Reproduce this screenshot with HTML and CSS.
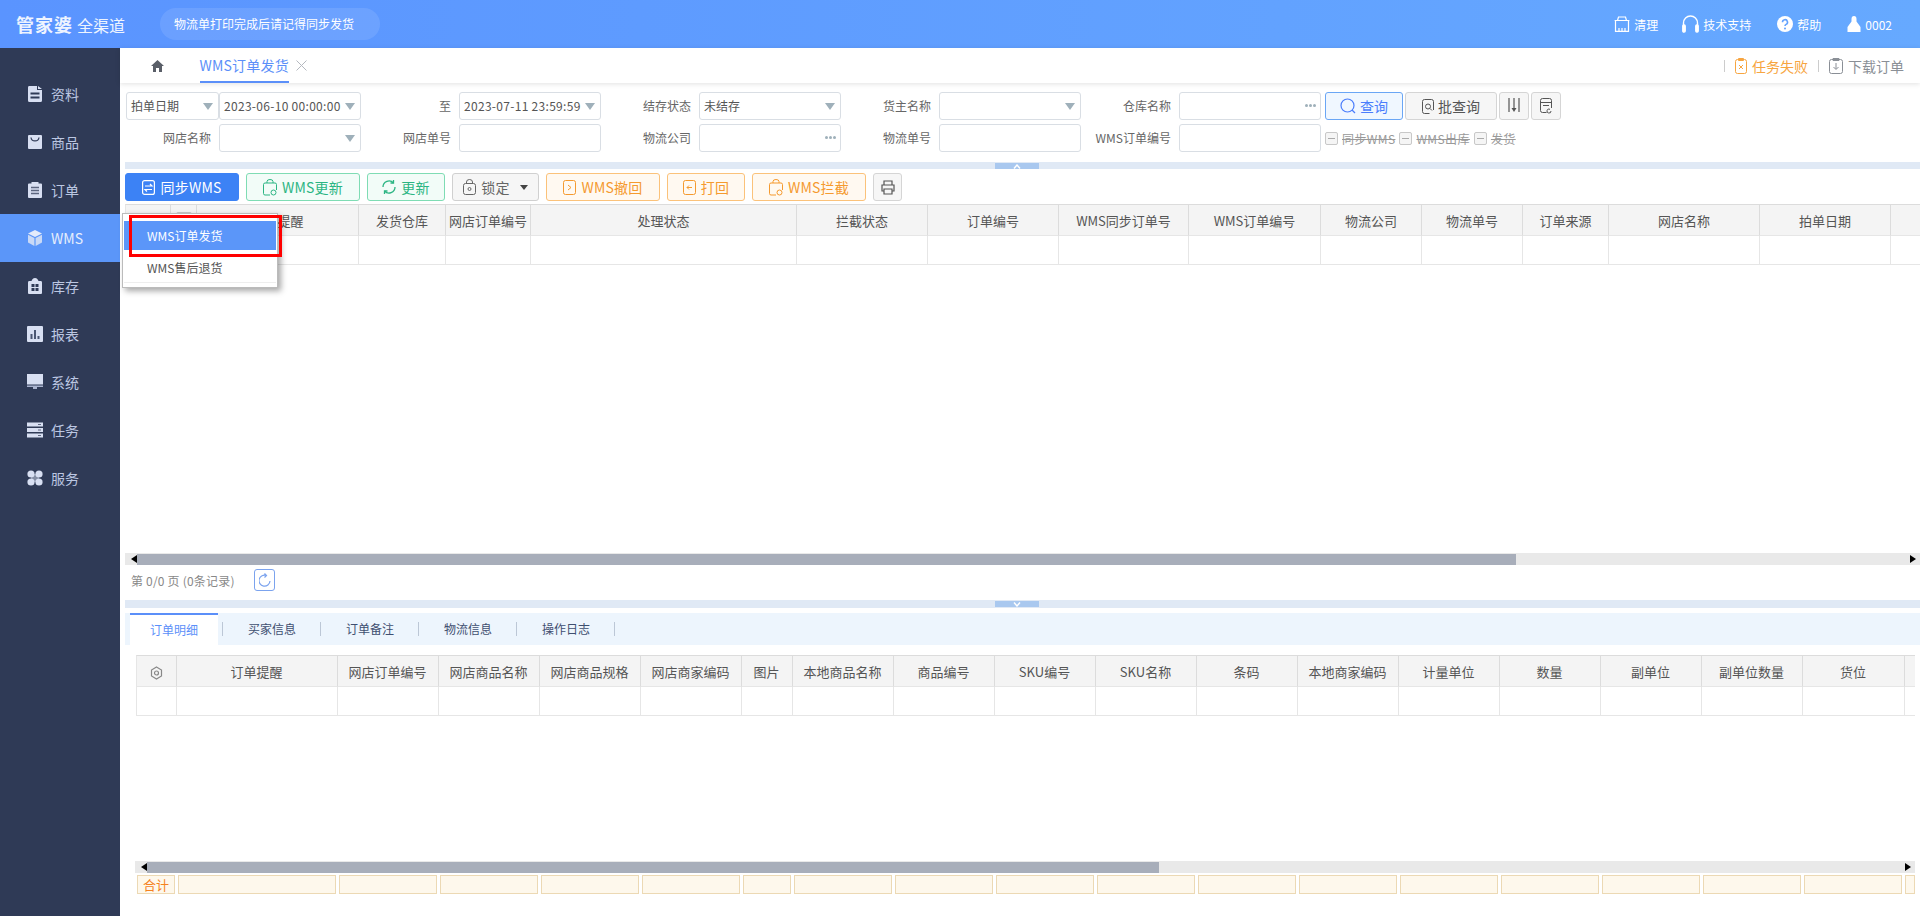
FILE: index.html
```html
<!DOCTYPE html>
<html lang="zh-CN">

<head>
    <meta charset="UTF-8">
    <title>WMS订单发货</title>
    <link rel="stylesheet" href="styles.css">
</head>

<body>
    <header class="topbar">
        <div class="logo"><span class="logo-main">管家婆</span><span class="logo-sub">全渠道</span></div>
        <div class="notice">物流单打印完成后请记得同步发货</div>
        <div class="top-links">
            <a class="top-link link-clean">
                <svg width="16" height="16" viewBox="0 0 16 16" fill="none" stroke="#fff" stroke-width="1.200"><path d="M3.500 4.500L4.500 1h7l1 3.500M.6 4.500h14.800M1.500 4.500v10.900h13V4.500M5 15v-3M8 15v-3M11 15v-3"/></svg>
                清理
            </a>
            <a class="top-link link-support">
                <svg width="17" height="18" viewBox="0 0 17 18" fill="none" stroke="#fff" stroke-width="1.400"><path d="M1.500 11V8a7 7 0 0 1 14 0v3"/><rect x=".8" y="10" width="2.400" height="7" rx="1" fill="#fff"/><rect x="13.800" y="10" width="2.400" height="7" rx="1" fill="#fff"/></svg>
                技术支持
            </a>
            <a class="top-link link-help">
                <svg width="16" height="16" viewBox="0 0 16 16"><circle cx="8" cy="8" r="8" fill="#fff"/><path d="M5.500 6.200a2.500 2.500 0 1 1 3.600 2.200c-.8.400-1.100.8-1.100 1.700" fill="none" stroke="#62a2ff" stroke-width="1.600"/><circle cx="8" cy="12.400" r="1" fill="#62a2ff"/></svg>
                帮助
            </a>
            <a class="top-link">
                <svg width="14" height="16" viewBox="0 0 14 16" fill="#fff"><path d="M4.500 3a2.500 3 0 0 1 5 0v2.500L13.500 11v5H.5v-5l4-5.500z"/></svg>
                0002
            </a>
        </div>
    </header>

    <div class="layout">
        <nav class="sidebar">
            <a class="nav-item">
                <svg width="16" height="16" viewBox="0 0 16 16"><path fill="#d8dff2" d="M2 0h8v4h5v10.500a1.500 1.500 0 0 1-1.500 1.500h-11A1.500 1.500 0 0 1 1 14.500v-13A1.500 1.500 0 0 1 2 0zM11 0l4 3h-4z"/><path stroke="#2f3a56" stroke-width="2" d="M3.500 7.500h9M3.500 11.500h9"/></svg>
                资料
            </a>
            <a class="nav-item">
                <svg width="16" height="16" viewBox="0 0 16 16"><rect x="1" y="1" width="14" height="14" rx="1" fill="#d8dff2"/><path fill="none" stroke="#2f3a56" stroke-width="1.200" d="M4 3.500c.5 4.500 7.500 4.500 8 0"/></svg>
                商品
            </a>
            <a class="nav-item">
                <svg width="16" height="16" viewBox="0 0 16 16"><path fill="#d8dff2" d="M2 1.500h2.500V0h7v1.500H14a1 1 0 0 1 1 1V15a1 1 0 0 1-1 1H2a1 1 0 0 1-1-1V2.500a1 1 0 0 1 1-1z"/><path stroke="#5c6680" stroke-width="1.400" d="M4 5.500h8M4 8.500h8M4 11.500h8"/></svg>
                订单
            </a>
            <a class="nav-item active">
                <svg width="16" height="16" viewBox="0 0 16 16"><path fill="#e3ebfb" d="M8 0l7 3.500L8 7 1 3.500z"/><path fill="#c9d9f6" d="M1 4.800l6.400 3.300V16L1 12.500zM15 4.800L8.600 8.100V16l6.400-3.500z"/></svg>
                WMS
            </a>
            <a class="nav-item">
                <svg width="16" height="16" viewBox="0 0 16 16"><path fill="#d8dff2" d="M8 0c2 0 3 1.500 3.500 3H14a1.500 1.500 0 0 1 1 1.500V15a1 1 0 0 1-1 1H2a1 1 0 0 1-1-1V4.500A1.500 1.500 0 0 1 2 3h2.500C5 1.500 6 0 8 0z"/><path fill="#2f3a56" d="M4.500 6h3v3h-3zM8.500 6h3v3h-3zM4.500 10h3v3h-3zM8.500 10h3v3h-3z"/></svg>
                库存
            </a>
            <a class="nav-item">
                <svg width="16" height="16" viewBox="0 0 16 16"><rect width="16" height="16" rx="1" fill="#d8dff2"/><path fill="#4b5672" d="M3.500 8h2v5h-2zM7 4h2v9H7zM10.500 10h2v3h-2z"/></svg>
                报表
            </a>
            <a class="nav-item">
                <svg width="16" height="16" viewBox="0 0 16 16"><path fill="#d8dff2" d="M0 0h16v10.500H0z"/><path fill="#aab4cf" d="M0 11.500h16V13H0zM6 13h4v2H6z"/></svg>
                系统
            </a>
            <a class="nav-item">
                <svg width="16" height="16" viewBox="0 0 16 16"><path fill="#d8dff2" d="M0 .5h16v4H0zM0 6h16v4H0zM0 11.500h16v4H0z"/><path fill="#5c6680" d="M11 2h3v1h-3zM11 7.500h3v1h-3zM11 13h3v1h-3z"/></svg>
                任务
            </a>
            <a class="nav-item">
                <svg width="16" height="16" viewBox="0 0 16 16" fill="#d8dff2"><circle cx="4" cy="4" r="3.600"/><circle cx="12" cy="4" r="3.600"/><circle cx="4" cy="12" r="3.600"/><circle cx="12" cy="12" r="3.600"/><path d="M4 4h8v8H4z" fill="#d8dff2" opacity=".5"/></svg>
                服务
            </a>
        </nav>

        <main class="content">
            <div class="tabbar">
                <svg class="home-icon" width="13" height="12" viewBox="0 0 13 12" fill="#5a5f68"><path d="M6.500 0L13 6h-2v6H8V8H5v4H2V6H0z"/></svg>
                <div class="page-tab">WMS订单发货</div>
                <svg class="tab-close" width="11" height="11" viewBox="0 0 11 11" stroke="#b4b8bf" fill="none"><path d="M.5.500l10 10M10.500.500l-10 10"/></svg>
                <div class="tab-tools">
                    <span class="tool-sep"></span>
                    <svg width="12" height="16" viewBox="0 0 12 16" fill="none" stroke="#f7a540"><rect x=".5" y="1.500" width="11" height="14" rx="2"/><path d="M3.500.5h5v2h-5zM4 7l4 4M8 7l-4 4"/></svg>
                    <span class="tool-fail">任务失败</span>
                    <span class="tool-sep"></span>
                    <svg width="14" height="16" viewBox="0 0 14 16" fill="none" stroke="#8a8f96"><rect x=".5" y="1.500" width="13" height="14" rx="2"/><path d="M4 .5h6v2H4zM7 5v6M4.500 9L7 11.500 9.500 9"/></svg>
                    <span class="tool-down">下载订单</span>
                </div>
            </div>

            <form class="filters">
                <div class="field field-select">拍单日期<i class="caret"></i></div>
                <div class="field field-select date">2023-06-10 00:00:00<i class="caret"></i></div>
                <label class="lbl">至</label>
                <div class="field field-select date">2023-07-11 23:59:59<i class="caret"></i></div>
                <label class="lbl">结存状态</label>
                <div class="field field-select">未结存<i class="caret"></i></div>
                <label class="lbl">货主名称</label>
                <div class="field field-select"><i class="caret"></i></div>
                <label class="lbl">仓库名称</label>
                <div class="field field-select"><i class="dots"><b></b><b></b><b></b></i></div>
                <div class="query-btns">
                    <button type="button" class="qbtn qbtn-main">
                        <svg width="16" height="16" viewBox="0 0 16 16" fill="none" stroke="#4a7dfc" stroke-width="1.200"><circle cx="7.500" cy="7.500" r="6.500"/><path d="M12 12l3 3"/></svg>
                        查询
                    </button>
                    <button type="button" class="qbtn qbtn-batch">
                        <svg width="12" height="15" viewBox="0 0 12 15" fill="none" stroke="#555"><path d="M11.500 11V2.500a2 2 0 0 0-2-2h-7a2 2 0 0 0-2 2v10a2 2 0 0 0 2 2h5"/><circle cx="6" cy="7.500" r="2.500"/><path d="M8 9.500l2 2"/></svg>
                        批查询
                    </button>
                    <button type="button" class="qbtn qbtn-icon">
                        <svg width="12" height="16" viewBox="0 0 12 16" stroke="#555" fill="none" stroke-width="1.200"><path d="M1 0v14M6 0v10M11 0v14"/><path d="M3.500 10h5L6 14z" fill="#555" stroke="none"/></svg>
                    </button>
                    <button type="button" class="qbtn qbtn-icon">
                        <svg width="12" height="16" viewBox="0 0 12 16" stroke="#555" fill="none"><path d="M2.500.5h7a2 2 0 0 1 2 2V10M2.500.5a2 2 0 0 0-2 2v10a2 2 0 0 0 2 2h4M1 4.500h10M3 7.500h6"/><path d="M11 13a2 2 0 1 1-1-1.700"/></svg>
                    </button>
                </div>

                <label class="lbl lbl-span">网店名称</label>
                <div class="field field-select"><i class="caret"></i></div>
                <label class="lbl">网店单号</label>
                <div class="field"></div>
                <label class="lbl">物流公司</label>
                <div class="field"><i class="dots"><b></b><b></b><b></b></i></div>
                <label class="lbl">物流单号</label>
                <div class="field"></div>
                <label class="lbl">WMS订单编号</label>
                <div class="field"></div>
                <div class="checks">
                    <span class="check"><i class="box"></i><s>同步WMS</s></span>
                    <span class="check"><i class="box"></i><s>WMS出库</s></span>
                    <span class="check"><i class="box"></i><s>发货</s></span>
                </div>
            </form>

            <div class="splitter split-top">
                <i class="split-handle"><svg width="8" height="5" viewBox="0 0 8 5" fill="none" stroke="#fff" stroke-width="1.400"><path d="M1 4.500L4 1l3 3.500"/></svg></i>
            </div>

            <div class="toolbar">
                <button class="btn btn-primary">
                    <svg width="13" height="15" viewBox="0 0 13 15" fill="none" stroke="#fff" stroke-width="1.200"><rect x=".6" y=".6" width="11.800" height="13.800" rx="2"/><path d="M3 6h7L8 4M10 9.500H3l2 2"/></svg>
                    同步WMS
                </button>
                <button class="btn btn-green">
                    <svg width="14" height="17" viewBox="0 0 14 17" fill="none" stroke="#2bb583"><path d="M2 4h10a1.500 1.500 0 0 1 1.500 1.500V11M2 4A1.500 1.500 0 0 0 .5 5.500v9A1.500 1.500 0 0 0 2 16h5M4 4V2.500a3 2 0 0 1 6 0V4"/><circle cx="10.500" cy="13.500" r="2.500"/></svg>
                    WMS更新
                </button>
                <button class="btn btn-green">
                    <svg width="14" height="16" viewBox="0 0 14 16" fill="none" stroke="#2bb583" stroke-width="1.300"><path d="M1 8a6 6 0 0 1 10.500-4M13 8a6 6 0 0 1-10.500 4"/><path d="M11.500 1v3H8.500M2.500 15v-3h3"/></svg>
                    更新
                </button>
                <button class="btn btn-gray">
                    <svg width="13" height="16" viewBox="0 0 13 16" fill="none" stroke="#666"><rect x=".5" y="4.500" width="12" height="11" rx="2"/><path d="M3.500 4.500V3a3 2.500 0 0 1 6 0v1.500"/><circle cx="6.500" cy="10" r="1.500"/></svg>
                    锁定
                    <i class="btn-caret"></i>
                </button>
                <button class="btn btn-orange">
                    <svg width="13" height="15" viewBox="0 0 13 15" fill="none" stroke="#f59a2f"><rect x=".5" y=".5" width="12" height="14" rx="2"/><path d="M5 5l3 2.500L5 10"/></svg>
                    WMS撤回
                </button>
                <button class="btn btn-orange">
                    <svg width="13" height="15" viewBox="0 0 13 15" fill="none" stroke="#f59a2f"><rect x=".5" y=".5" width="12" height="14" rx="2"/><path d="M9 7.500H4M6 5.500l-2 2 2 2"/></svg>
                    打回
                </button>
                <button class="btn btn-orange">
                    <svg width="14" height="17" viewBox="0 0 14 17" fill="none" stroke="#f59a2f"><path d="M2 4h10a1.500 1.500 0 0 1 1.500 1.500V11M2 4A1.500 1.500 0 0 0 .5 5.500v9A1.500 1.500 0 0 0 2 16h5M4 4V2.500a3 2 0 0 1 6 0V4"/><circle cx="10.500" cy="13.500" r="2.500"/></svg>
                    WMS拦截
                </button>
                <button class="btn btn-print">
                    <svg width="14" height="15" viewBox="0 0 14 15" fill="none" stroke="#555" stroke-width="1.200"><path d="M3 5V1h8v4M3 11H1V5h12v6h-2M3 9h8v5H3z"/></svg>
                </button>
            </div>

            <div class="grid-wrap grid-main">
                <table class="grid">
                    <colgroup>
                        <col width="46"><col width="26"><col width="162"><col width="87"><col width="85"><col width="266"><col width="131"><col width="131"><col width="130"><col width="132"><col width="101"><col width="101"><col width="86"><col width="151"><col width="131"><col width="40">
                    </colgroup>
                    <tr>
                        <th></th><th><i class="box head-box"></i></th><th>订单提醒</th><th>发货仓库</th><th>网店订单编号</th><th>处理状态</th><th>拦截状态</th><th>订单编号</th><th>WMS同步订单号</th><th>WMS订单编号</th><th>物流公司</th><th>物流单号</th><th>订单来源</th><th>网店名称</th><th>拍单日期</th><th></th>
                    </tr>
                    <tr>
                        <td></td><td></td><td></td><td></td><td></td><td></td><td></td><td></td><td></td><td></td><td></td><td></td><td></td><td></td><td></td><td></td>
                    </tr>
                </table>
            </div>
            <div class="hscroll">
                <i class="arrow arrow-l"></i>
                <div class="track"><div class="thumb thumb-main"></div></div>
                <i class="arrow arrow-r"></i>
            </div>

            <div class="pager">
                <span class="page-info">第 0/0 页 (0条记录)</span>
                <button class="refresh">
                    <svg width="12" height="15" viewBox="0 0 12 15" fill="none" stroke="#7ba3ee" stroke-width="1.200"><path d="M7.500 2.500A5.500 5.500 0 1 0 11 8M5.500.5l2 2-2 2"/></svg>
                </button>
            </div>

            <div class="splitter split-bottom">
                <i class="split-handle"><svg width="8" height="5" viewBox="0 0 8 5" fill="none" stroke="#fff" stroke-width="1.400"><path d="M1 .5L4 4l3-3.500"/></svg></i>
            </div>

            <div class="detail-tabs">
                <a class="dtab on">订单明细</a>
                <a class="dtab">买家信息</a>
                <a class="dtab">订单备注</a>
                <a class="dtab">物流信息</a>
                <a class="dtab">操作日志</a>
            </div>

            <div class="grid-wrap grid-detail">
                <table class="grid">
                    <colgroup>
                        <col width="41"><col width="161"><col width="101"><col width="101"><col width="101"><col width="101"><col width="51"><col width="101"><col width="101"><col width="101"><col width="101"><col width="101"><col width="101"><col width="101"><col width="101"><col width="101"><col width="101"><col width="102"><col width="20">
                    </colgroup>
                    <tr>
                        <th><svg class="gear" width="13" height="14" viewBox="0 0 13 14" fill="none" stroke="#888" stroke-width="1.200"><path d="M6.500 1l5 3v6l-5 3-5-3V4z"/><circle cx="6.500" cy="7" r="2"/></svg></th>
                        <th>订单提醒</th><th>网店订单编号</th><th>网店商品名称</th><th>网店商品规格</th><th>网店商家编码</th><th>图片</th><th>本地商品名称</th><th>商品编号</th><th>SKU编号</th><th>SKU名称</th><th>条码</th><th>本地商家编码</th><th>计量单位</th><th>数量</th><th>副单位</th><th>副单位数量</th><th>货位</th><th></th>
                    </tr>
                    <tr>
                        <td></td><td></td><td></td><td></td><td></td><td></td><td></td><td></td><td></td><td></td><td></td><td></td><td></td><td></td><td></td><td></td><td></td><td></td><td></td>
                    </tr>
                </table>
            </div>
            <div class="hscroll hscroll-detail">
                <i class="arrow arrow-l"></i>
                <div class="track"><div class="thumb thumb-detail"></div></div>
                <i class="arrow arrow-r"></i>
            </div>

            <div class="totals">
                <div class="total total-label">合计</div>
                <div class="total total-wide"></div>
                <div class="total"></div><div class="total"></div><div class="total"></div><div class="total"></div>
                <div class="total total-pic"></div>
                <div class="total"></div><div class="total"></div><div class="total"></div><div class="total"></div><div class="total"></div><div class="total"></div><div class="total"></div><div class="total"></div><div class="total"></div><div class="total"></div><div class="total"></div>
                <div class="total total-end"></div>
            </div>
        </main>
    </div>

    <!-- dropdown of 同步WMS -->
    <div class="sync-menu">
        <div class="sync-item on">WMS订单发货</div>
        <div class="sync-item">WMS售后退货</div>
    </div>
    <div class="red-mark"></div>
</body>

</html>
```

FILE: styles.css
```css
* {
    box-sizing: border-box;
}

html,
body {
    height: 916px;
    overflow: hidden;
}

body {
    margin: 0;
    font-family: "Noto Sans CJK SC", "Liberation Sans", sans-serif;
    font-size: 12px;
    color: #555;
    background: #fff;
}

i {
    font-style: normal;
}

/* top bar */
.topbar {
    height: 48px;
    display: flex;
    align-items: center;
    color: #fff;
    background: linear-gradient(90deg, #5a94ff, #66a9ff);
}

.logo {
    width: 160px;
    padding-left: 16px;
    font-weight: 700;
    white-space: nowrap;
    color: #eef4ff;
}

.logo-main {
    font-size: 18px;
    letter-spacing: 1px;
}

.logo-sub {
    margin-left: 4px;
    font-size: 16px;
    font-weight: 400;
}

.notice {
    width: 220px;
    height: 32px;
    line-height: 32px;
    padding-left: 14px;
    border-radius: 16px;
    background: rgba(255, 255, 255, 0.1);
}

.top-links {
    margin-left: auto;
    display: flex;
    padding-right: 28px;
}

.top-link {
    display: flex;
    align-items: center;
    gap: 4px;
    margin-left: 26px;
}

.link-support {
    margin-left: 24px;
}

/* sidebar */
.layout {
    display: flex;
    height: 868px;
}

.sidebar {
    width: 120px;
    flex: none;
    padding-top: 22px;
    background: #2f3a56;
}

.nav-item {
    height: 48px;
    display: flex;
    align-items: center;
    gap: 8px;
    padding-left: 27px;
    font-size: 14px;
    color: #bcc7e2;
}

.nav-item.active {
    background: #5b96f9;
    color: #e6eefc;
}

/* main column */
.content {
    flex: 1;
    min-width: 0;
    padding-left: 5px;
}

.tabbar {
    height: 35px;
    margin-left: -5px;
    padding-left: 30.500px;
    display: flex;
    align-items: center;
    box-shadow: 0 1px 5px rgba(0, 0, 0, 0.12);
}

.page-tab {
    height: 35px;
    line-height: 35px;
    margin-left: 36px;
    font-size: 14px;
    letter-spacing: 0.2px;
    color: #5b8ff9;
    border-bottom: 2px solid #5b8ff9;
}

.tab-close {
    margin-left: 7px;
}

.tab-tools {
    margin-left: auto;
    padding-right: 16px;
    display: flex;
    align-items: center;
    gap: 5px;
    font-size: 14px;
}

.tool-sep {
    width: 1px;
    height: 12px;
    margin-right: 5px;
    background: #ccc;
}

.tool-fail {
    margin-right: 5px;
    color: #f7a540;
}

.tool-down {
    color: #8a8f96;
}

/* filters */
.filters {
    margin: 9px 0 0 1px;
    display: grid;
    grid-template-columns: 93px 142px 98px 142px 98px 142px 98px 142px 98px 142px auto;
    grid-auto-rows: 28px;
    row-gap: 4px;
}

.lbl {
    line-height: 28px;
    padding-right: 8px;
    text-align: right;
    color: #666;
    white-space: nowrap;
}

.field {
    position: relative;
    line-height: 26px;
    padding-left: 4px;
    background: #fff;
    border: 1px solid #d9dee4;
    border-radius: 3px;
    white-space: nowrap;
}

.date {
    letter-spacing: 0.3px;
}

.caret {
    position: absolute;
    right: 5px;
    top: 10px;
    border: 5px solid transparent;
    border-top: 7px solid #9fb0ba;
    border-bottom: 0;
}

.dots {
    position: absolute;
    right: 4px;
    top: 11px;
    display: flex;
    gap: 1px;
}

.dots b {
    width: 3px;
    height: 3px;
    border-radius: 50%;
    background: #9fb0ba;
}

.query-btns {
    display: flex;
    gap: 2px;
    margin-left: 4px;
}

.qbtn {
    height: 28px;
    padding: 0;
    display: flex;
    align-items: center;
    justify-content: center;
    gap: 4px;
    font: inherit;
    font-size: 14px;
    color: #555;
    background: #f6f6f6;
    border: 1px solid #d5d5d5;
    border-radius: 3px;
}

.qbtn-main {
    width: 78px;
    color: #4a7dfc;
    background: #f0f7ff;
    border-color: #6aa6f5;
}

.qbtn-batch {
    width: 92px;
}

.qbtn-icon {
    width: 30px;
}

.checks {
    display: flex;
    align-items: center;
    margin-left: 4px;
    color: #999;
    letter-spacing: 0.4px;
    white-space: nowrap;
}

.check {
    display: flex;
    align-items: center;
    gap: 4px;
    margin-right: 4px;
}

.box {
    display: inline-block;
    position: relative;
    width: 13px;
    height: 13px;
    background: #f5f5f5;
    border: 1px solid #c8c8c8;
    border-radius: 2px;
}

.box::after {
    content: "";
    position: absolute;
    left: 2px;
    right: 2px;
    top: 5px;
    height: 1px;
    background: #aaa;
}

.head-box {
    width: 16px;
    height: 16px;
    position: relative;
    top: -2px;
    vertical-align: middle;
}

.splitter {
    position: relative;
    height: 7px;
    margin-top: 10px;
    background: #e0e9f5;
}

.split-handle {
    position: absolute;
    left: 870px;
    top: 1px;
    width: 44px;
    height: 6px;
    display: flex;
    align-items: center;
    justify-content: center;
    background: #a9c8ef;
}

.split-bottom {
    height: 8px;
    margin-top: 5px;
}

/* toolbar */
.toolbar {
    display: flex;
    gap: 7px;
    margin-top: 4px;
}

.btn {
    height: 28px;
    padding: 0;
    display: flex;
    align-items: center;
    justify-content: center;
    gap: 5px;
    font: inherit;
    font-size: 14px;
    letter-spacing: 0.2px;
    border-radius: 3px;
    background: #fff;
}

.btn:nth-child(1),
.btn:nth-child(2),
.btn:nth-child(5),
.btn:nth-child(7) {
    width: 114px;
}

.btn:nth-child(3),
.btn:nth-child(6) {
    width: 78px;
}

.btn:nth-child(4) {
    width: 87px;
}

.btn-primary {
    color: #fff;
    background: #3c82f5;
    border: 1px solid #3c82f5;
}

.btn-green {
    color: #2bb583;
    background: #f2fcf8;
    border: 1px solid #7fdcb4;
}

.btn-gray {
    color: #666;
    background: #f6f6f6;
    border: 1px solid #d0d0d0;
}

.btn-caret {
    margin-left: 5px;
    border: 4px solid transparent;
    border-top: 5px solid #444;
    border-bottom: 0;
}

.btn-orange {
    color: #f59a2f;
    background: #fff9f1;
    border: 1px solid #fbc27a;
}

.btn-print {
    width: 29px;
    background: #f6f6f6;
    border: 1px solid #d5d5d5;
}

/* tables */
.grid-wrap {
    overflow: hidden;
}

.grid-main {
    height: 349px;
    margin-top: 3px;
}

.grid-detail {
    height: 206px;
    margin: 10px 5px 0 10.500px;
}

.grid {
    table-layout: fixed;
    width: 0;
    border-collapse: separate;
    border-spacing: 0;
}

.grid th,
.grid td {
    padding: 0;
    overflow: hidden;
    white-space: nowrap;
    border-right: 1px solid #e6e6e6;
    border-bottom: 1px solid #e6e6e6;
}

.grid th {
    height: 32px;
    font-size: 13px;
    font-weight: 400;
    color: #555;
    background: #f4f4f4;
    border-top: 1px solid #dcdcdc;
    border-right-color: #dcdcdc;
}

.grid td {
    height: 29px;
}

.grid th:first-child,
.grid td:first-child {
    border-left: 1px solid #e6e6e6;
}

.gear {
    vertical-align: middle;
}

/* fake scrollbars */
.hscroll {
    height: 12px;
    display: flex;
    background: #e9e9e9;
}

.hscroll-detail {
    margin: 0 5px 0 10px;
}

.arrow {
    width: 12px;
    flex: none;
    position: relative;
}

.arrow::after {
    content: "";
    position: absolute;
    top: 2px;
    border: 4px solid transparent;
}

.arrow-l::after {
    right: 0;
    border-right: 6px solid #000;
    border-left: 0;
}

.arrow-r::after {
    left: 2px;
    border-left: 6px solid #000;
    border-right: 0;
}

.track {
    flex: 1;
}

.thumb {
    height: 11px;
    margin-top: 1px;
    background: #a8aeba;
}

.thumb-main {
    width: 1379px;
}

.thumb-detail {
    width: 1012px;
}

.pager {
    height: 30px;
    display: flex;
    align-items: center;
    padding-left: 6px;
    color: #888;
}

.page-info {
    width: 123px;
    letter-spacing: 0.2px;
}

.refresh {
    width: 21px;
    height: 22px;
    padding: 0;
    display: flex;
    align-items: center;
    justify-content: center;
    background: #fff;
    border: 1px solid #7ba3ee;
    border-radius: 3px;
}

/* detail tabs */
.detail-tabs {
    height: 32px;
    margin-top: 5px;
    padding-left: 5px;
    display: flex;
    background: #edf5fd;
}

.dtab {
    position: relative;
    width: 98px;
    line-height: 32px;
    text-align: center;
    color: #3f4f70;
}

.dtab::after {
    content: "";
    position: absolute;
    right: 0;
    top: 9px;
    height: 14px;
    width: 1px;
    background: #bcc7d6;
}

.dtab.on {
    width: 88px;
    margin-right: 5px;
    color: #5b8ff9;
    background: #fff;
    border-top: 2px solid #5b8ff9;
    line-height: 30px;
}

.dtab.on::after {
    right: -5px;
    top: 7px;
}

.totals {
    display: flex;
    gap: 3px;
    height: 19px;
    margin: 2px 5px 0 12px;
    overflow: hidden;
}

.total {
    width: 98px;
    flex: none;
    background: #fef8ec;
    border: 1px solid #ecd9b4;
}

.total-label {
    width: 38px;
    text-align: center;
    font-size: 13px;
    line-height: 17px;
    color: #f5821f;
}

.total-wide {
    width: 158px;
}

.total-pic {
    width: 48px;
}

.total-end {
    width: 10px;
}

/* overlays */
.sync-menu {
    position: absolute;
    left: 122px;
    top: 213px;
    width: 156px;
    height: 75px;
    padding: 7px 1px 0;
    background: #fff;
    border: 1px solid #bbb;
    box-shadow: 3px 3px 6px rgba(0, 0, 0, 0.35);
    color: #555;
}

.sync-item {
    height: 31px;
    line-height: 31px;
    padding-left: 23px;
    border-bottom: 1px solid #eee;
}

.sync-item.on {
    height: 29px;
    line-height: 29px;
    color: #fff;
    background: #5b96f9;
    border-bottom: 0;
}

.sync-item:last-child {
    margin-top: 2px;
}

.red-mark {
    position: absolute;
    left: 129px;
    top: 215px;
    width: 153px;
    height: 42px;
    border: 3px solid #f00;
}
```
